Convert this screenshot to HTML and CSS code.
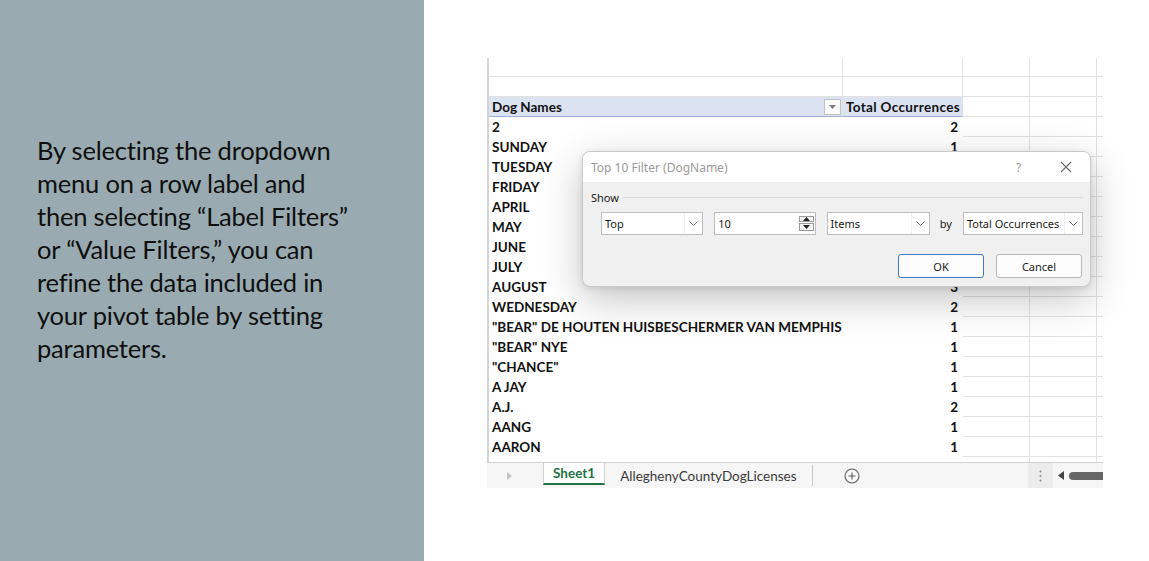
FILE: index.html
```html
<!DOCTYPE html>
<html>
<head>
<meta charset="utf-8">
<link rel="stylesheet" href="styles.css">
</head>
<body>
<div class="slide">
  <div class="left">
    <p class="caption">By selecting the dropdown<br>menu on a row label and<br>then selecting “Label Filters”<br>or “Value Filters,” you can<br>refine the data included in<br>your pivot table by setting<br>parameters.</p>
  </div>
  <div class="right">
    <div class="sheet">
      <div class="grid">
        <div class="row"><div class="c a"></div><div class="c b"></div><div class="c g"></div><div class="c g"></div><div class="c e"></div></div>
        <div class="row"><div class="c a"></div><div class="c b"></div><div class="c g"></div><div class="c g"></div><div class="c e"></div></div>
        <div class="row head"><div class="c a">Dog Names<span class="dd"><svg width="7" height="4" viewBox="0 0 7 4"><path d="M0 0h7L3.5 4z" fill="#7a7a7a"/></svg></span></div><div class="c b">Total Occurrences</div><div class="c g"></div><div class="c g"></div><div class="c e"></div></div>
        <div class="row"><div class="c a p">2</div><div class="c b p">2</div><div class="c g"></div><div class="c g"></div><div class="c e"></div></div>
        <div class="row"><div class="c a p">SUNDAY</div><div class="c b p">1</div><div class="c g"></div><div class="c g"></div><div class="c e"></div></div>
        <div class="row"><div class="c a p">TUESDAY</div><div class="c b p">1</div><div class="c g"></div><div class="c g"></div><div class="c e"></div></div>
        <div class="row"><div class="c a p">FRIDAY</div><div class="c b p">1</div><div class="c g"></div><div class="c g"></div><div class="c e"></div></div>
        <div class="row"><div class="c a p">APRIL</div><div class="c b p">1</div><div class="c g"></div><div class="c g"></div><div class="c e"></div></div>
        <div class="row"><div class="c a p">MAY</div><div class="c b p">1</div><div class="c g"></div><div class="c g"></div><div class="c e"></div></div>
        <div class="row"><div class="c a p">JUNE</div><div class="c b p">2</div><div class="c g"></div><div class="c g"></div><div class="c e"></div></div>
        <div class="row"><div class="c a p">JULY</div><div class="c b p">2</div><div class="c g"></div><div class="c g"></div><div class="c e"></div></div>
        <div class="row"><div class="c a p">AUGUST</div><div class="c b p">3</div><div class="c g"></div><div class="c g"></div><div class="c e"></div></div>
        <div class="row"><div class="c a p">WEDNESDAY</div><div class="c b p">2</div><div class="c g"></div><div class="c g"></div><div class="c e"></div></div>
        <div class="row"><div class="c a p">"BEAR" DE HOUTEN HUISBESCHERMER VAN MEMPHIS</div><div class="c b p">1</div><div class="c g"></div><div class="c g"></div><div class="c e"></div></div>
        <div class="row"><div class="c a p">"BEAR" NYE</div><div class="c b p">1</div><div class="c g"></div><div class="c g"></div><div class="c e"></div></div>
        <div class="row"><div class="c a p">"CHANCE"</div><div class="c b p">1</div><div class="c g"></div><div class="c g"></div><div class="c e"></div></div>
        <div class="row"><div class="c a p">A JAY</div><div class="c b p">1</div><div class="c g"></div><div class="c g"></div><div class="c e"></div></div>
        <div class="row"><div class="c a p">A.J.</div><div class="c b p">2</div><div class="c g"></div><div class="c g"></div><div class="c e"></div></div>
        <div class="row"><div class="c a p">AANG</div><div class="c b p">1</div><div class="c g"></div><div class="c g"></div><div class="c e"></div></div>
        <div class="row"><div class="c a p">AARON</div><div class="c b p">1</div><div class="c g"></div><div class="c g"></div><div class="c e"></div></div>
        <div class="row partial"><div class="c a p"></div><div class="c b p"></div><div class="c g"></div><div class="c g"></div><div class="c e"></div></div>
      </div>
      <div class="tabbar">
        <span class="nav"><svg width="5" height="8" viewBox="0 0 5 8"><path d="M0 0l5 4-5 4z" fill="#c4c4c4"/></svg></span>
        <span class="tab active">Sheet1</span>
        <span class="tab">AlleghenyCountyDogLicenses</span>
        <span class="add"><svg width="16" height="16" viewBox="0 0 16 16"><circle cx="8" cy="8" r="7" fill="none" stroke="#606060" stroke-width="1.1"/><path d="M8 4.5v7M4.5 8h7" stroke="#606060" stroke-width="1.2"/></svg></span>
        <span class="spacer"></span>
        <span class="dots"><svg width="3" height="12" viewBox="0 0 3 12"><circle cx="1.5" cy="1.5" r="1" fill="#8a8a8a"/><circle cx="1.5" cy="6" r="1" fill="#8a8a8a"/><circle cx="1.5" cy="10.5" r="1" fill="#8a8a8a"/></svg></span>
        <span class="scroll"><svg class="larr" width="6" height="9" viewBox="0 0 6 9"><path d="M6 0v9L0 4.5z" fill="#444"/></svg><span class="thumb"></span></span>
      </div>

      <div class="dialog">
        <div class="dtitle">
          <span class="dname">Top 10 Filter (DogName)</span>
          <span class="qm">?</span>
          <span class="close"><svg width="12" height="12" viewBox="0 0 12 12"><path d="M1 1l10 10M11 1L1 11" stroke="#6a6a6a" stroke-width="1.1"/></svg></span>
        </div>
        <div class="dbody">
          <div class="group"><span>Show</span><span class="gline"></span></div>
          <div class="controls">
            <div class="sel w-top"><span>Top</span><span class="arr"><svg width="9" height="5" viewBox="0 0 9 5"><path d="M0.5 0.5l4 4 4-4" fill="none" stroke="#777" stroke-width="1"/></svg></span></div>
            <div class="spin"><span>10</span><span class="spbtns"><span class="spb"><svg width="7" height="4" viewBox="0 0 7 4"><path d="M0 4h7L3.5 0z" fill="#222"/></svg></span><span class="spb"><svg width="7" height="4" viewBox="0 0 7 4"><path d="M0 0h7L3.5 4z" fill="#222"/></svg></span></span></div>
            <div class="sel w-items"><span>Items</span><span class="arr"><svg width="9" height="5" viewBox="0 0 9 5"><path d="M0.5 0.5l4 4 4-4" fill="none" stroke="#777" stroke-width="1"/></svg></span></div>
            <span class="by">by</span>
            <div class="sel w-tot"><span>Total Occurrences</span><span class="arr"><svg width="9" height="5" viewBox="0 0 9 5"><path d="M0.5 0.5l4 4 4-4" fill="none" stroke="#777" stroke-width="1"/></svg></span></div>
          </div>
          <div class="buttons">
            <div class="btn ok">OK</div>
            <div class="btn">Cancel</div>
          </div>
        </div>
      </div>
    </div>
  </div>
</div>
</body>
</html>
```
FILE: styles.css
```css
html, body {
  margin: 0;
  padding: 0;
}
body {
  width: 1149px;
  height: 561px;
  overflow: hidden;
  background: #ffffff;
}
.slide {
  display: flex;
  width: 1149px;
  height: 561px;
}
.left {
  width: 424px;
  flex: none;
  background: #99abb1;
  box-sizing: border-box;
  padding: 134px 20px 0 37px;
}
.caption {
  margin: 0;
  font-family: "Lato", "Open Sans", sans-serif;
  font-size: 25.5px;
  line-height: 33px;
  color: #0f0f0f;
  letter-spacing: -0.2px;
  white-space: nowrap;
}
.right {
  flex: 1;
  padding: 58px 0 0 63px;
}
.sheet {
  position: relative;
  width: 616px;
  height: 430px;
  display: flex;
  flex-direction: column;
  font-family: "Lato", "Liberation Sans", sans-serif;
}
.grid {
  border-left: 2px solid #d4d4d4;
  height: 405px;
  overflow: hidden;
}
.row {
  display: grid;
  grid-template-columns: 354px 120px 67px 67px 6px;
  height: 20px;
}
.row:first-child { height: 19px; }
.c {
  box-sizing: border-box;
  border-right: 1px solid #e2e2e2;
  border-bottom: 1px solid #e2e2e2;
  font-size: 13.5px;
  font-weight: 700;
  color: #111;
  line-height: 20px;
  white-space: nowrap;
  overflow: hidden;
}
.c.e { border-right: none; }
.c.a { padding-left: 3px; }
.c.b { text-align: right; padding-right: 4px; }
.c.p {
  border-color: transparent;
  border-bottom-color: transparent;
}
.c.a.p { border-right-color: transparent; }
.row.head .c.a, .row.head .c.b {
  background: #dbe2f2;
  border-bottom: 1px solid #9fb2d9;
  border-right-color: transparent;
  line-height: 20px;
  position: relative;
}
.row.head .c.b {
  padding-right: 2px;
  letter-spacing: 0.35px;
}
.dd {
  position: absolute;
  right: 1px;
  top: 2px;
  width: 15px;
  height: 14px;
  background: #fbfbfb;
  border: 1px solid #c2c2c2;
  display: flex;
  align-items: center;
  justify-content: center;
}
.tabbar {
  height: 25px;
  border-top: 1px solid #d0d0d0;
  background: #f6f6f6;
  display: flex;
  align-items: stretch;
  font-family: "Lato", "Liberation Sans", sans-serif;
  font-size: 13.5px;
}
.nav {
  width: 56px;
  display: flex;
  align-items: center;
  padding-left: 20px;
  box-sizing: border-box;
}
.tab {
  display: flex;
  align-items: center;
  padding: 0 15px 0 15px;
  color: #3a3a3a;
  border-right: 1px solid #c8c8c8;
  margin: 2px 0 2px;
}
.tab.active {
  background: #fff;
  color: #217346;
  font-weight: 700;
  padding: 0 9px;
  margin: 0 0 3px;
  border-right: 1px solid #d0d0d0;
  border-left: 1px solid #d0d0d0;
  border-bottom: 2px solid #217346;
}
.add {
  display: flex;
  align-items: center;
  padding-left: 31px;
}
.spacer { flex: 1; }
.dots {
  width: 25px;
  background: #ececec;
  display: flex;
  align-items: center;
  justify-content: center;
}
.scroll {
  display: flex;
  align-items: center;
  gap: 5px;
  width: 50px;
  padding-left: 5px;
  box-sizing: border-box;
  overflow: hidden;
}
.larr { flex: none; }
.thumb {
  display: block;
  width: 60px;
  height: 8px;
  border-radius: 4px;
  background: #666;
  flex: none;
}

.dialog {
  position: absolute;
  left: 95px;
  top: 93px;
  width: 509px;
  height: 136px;
  border-radius: 8px;
  border: 1px solid #c9c9c9;
  box-sizing: border-box;
  overflow: hidden;
  background: #f0f0f0;
  box-shadow: 0 12px 40px rgba(0, 0, 0, 0.24), 0 2px 6px rgba(0,0,0,0.1);
  font-family: "Noto Sans", "Open Sans", sans-serif;
  font-size: 11px;
  color: #1a1a1a;
}
.dtitle {
  height: 30px;
  background: #fff;
  display: flex;
  align-items: center;
  padding-left: 8px;
}
.dname {
  flex: 1;
  color: #9a9a9a;
  font-size: 12px;
}
.qm {
  color: #a0a0a0;
  font-size: 12px;
  width: 44px;
}
.close {
  width: 30px;
  display: flex;
  align-items: center;
}
.dbody {
  padding: 7px 7px 0 8px;
}
.group {
  display: flex;
  align-items: center;
  gap: 4px;
  height: 16px;
}
.gline {
  flex: 1;
  height: 1px;
  background: #dcdcdc;
}
.controls {
  display: flex;
  align-items: center;
  margin-top: 7px;
  padding-left: 10px;
  height: 23px;
}
.sel, .spin {
  height: 23px;
  box-sizing: border-box;
  border: 1px solid #bdbdbd;
  background: #fff;
  display: flex;
  align-items: center;
  padding-left: 3px;
}
.sel span:first-child, .spin span:first-child { flex: 1; }
.arr {
  width: 17px;
  align-self: stretch;
  display: flex;
  align-items: center;
  justify-content: center;
  border-left: 1px solid #f0f0f0;
}
.w-top { width: 103px; }
.spin { width: 102px; margin-left: 11px; }
.w-items { width: 104px; margin-left: 11px; }
.by { margin: 0 11px 0 10px; }
.w-tot { width: 121px; }
.spbtns {
  display: flex;
  flex-direction: column;
  gap: 1px;
  padding-right: 1px;
}
.spb {
  width: 15px;
  height: 8px;
  border: 1px solid #9a9a9a;
  background: #f4f4f4;
  display: flex;
  align-items: center;
  justify-content: center;
  box-sizing: border-box;
}
.buttons {
  display: flex;
  justify-content: flex-end;
  gap: 12px;
  margin-top: 19px;
  padding-right: 1px;
}
.btn {
  width: 86px;
  height: 24px;
  box-sizing: border-box;
  border: 1px solid #b8b8b8;
  border-radius: 3px;
  background: #fdfdfd;
  display: flex;
  align-items: center;
  justify-content: center;
  font-size: 11px;
}
.btn.ok {
  border-color: #3d7cc9;
}
```
